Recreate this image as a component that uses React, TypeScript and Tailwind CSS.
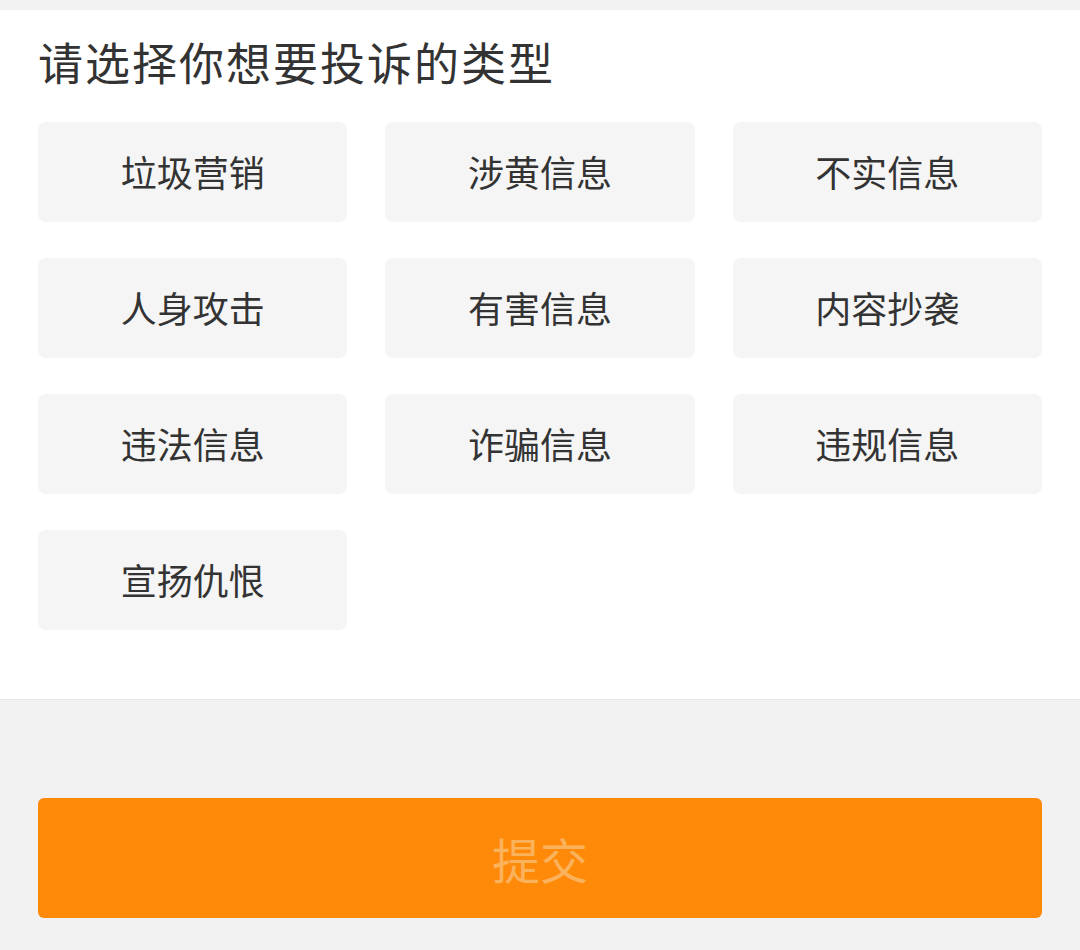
const types = [
  '垃圾营销', '涉黄信息', '不实信息',
  '人身攻击', '有害信息', '内容抄袭',
  '违法信息', '诈骗信息', '违规信息',
  '宣扬仇恨',
]

export default function App() {
  return (
    <div
      className="min-h-[950px] w-[1080px] bg-[#f2f2f2]"
      style={{ fontFamily: '"Noto Sans CJK SC", "Noto Sans", sans-serif' }}
    >
      {/* top strip */}
      <div className="h-[10px] bg-[#f2f2f2]" />

      {/* type picker */}
      <section className="bg-white px-[38px] pt-[22px] pb-[69px] border-b border-[#e6e6e6]">
        <h2 className="h-[60px] text-[45px] leading-[60px] tracking-[2px] text-[#333333]">请选择你想要投诉的类型</h2>
        <div className="mt-[30px] grid grid-cols-3 gap-x-[38px] gap-y-[36px]">
          {types.map((t) => (
            <button
              key={t}
              className="flex h-[100px] items-center justify-center rounded-[8px] bg-[#f5f5f5] pb-[3px] text-[36px] text-[#333333]"
            >
              {t}
            </button>
          ))}
        </div>
      </section>

      {/* submit */}
      <div className="px-[38px] pt-[98px] pb-[33px]">
        <button className="flex h-[120px] w-full items-center justify-center rounded-[6px] bg-[#ff8a0a] text-[48px] text-[#fbb25c]">
          提交
        </button>
      </div>
    </div>
  )
}
